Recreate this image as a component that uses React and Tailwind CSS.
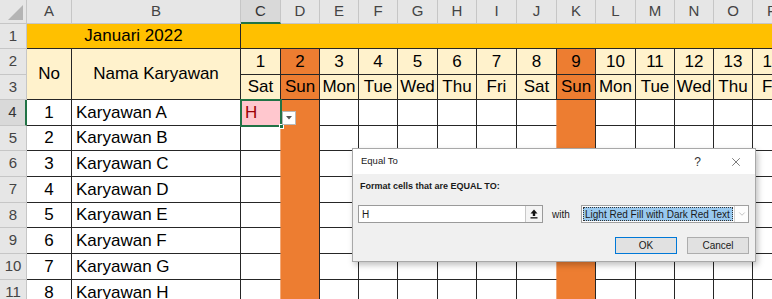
import React from "react";
import { X, ChevronDown } from "lucide-react";

const letters = ["A", "B", "C", "D", "E", "F", "G", "H", "I", "J", "K", "L", "M", "N", "O", "P"];
const days = ["Sat", "Sun", "Mon", "Tue", "Wed", "Thu", "Fri", "Sat", "Sun", "Mon", "Tue", "Wed", "Thu", "Fri"];
const names = ["A", "B", "C", "D", "E", "F", "G", "H"];

const hdr =
  "bg-[#e6e6e6] border-r border-b border-[#c6c6c6] text-[#444] flex items-center justify-center text-[15px]";
const line = "border-r border-b border-[#262626]";

function isSunday(i) {
  return i === 1 || i === 8;
}

export default function App() {
  return (
    <div className="relative w-[772px] h-[299px] overflow-hidden bg-white font-['Liberation_Sans',Arial,sans-serif] text-black">
      <div className="grid grid-cols-[27px_45px_169px_40px_39px_39px_39px_40px_39px_40px_40px_39px_40px_39px_39px_39px_39px] grid-rows-[24px_25px_26px_25px_26px_25px_26px_26px_25px_26px_26px_26px]">
        {/* column headers */}
        <div className={hdr + " items-end justify-end p-[3px]"}>
          <svg width="15" height="15" viewBox="0 0 15 15">
            <path d="M15 0 L15 15 L0 15 Z" fill="#b4b4b4" />
          </svg>
        </div>
        {letters.map((l) => (
          <div
            key={l}
            className={
              l === "C"
                ? "bg-[#d9d9d9] border-r border-[#c6c6c6] border-b-2 border-b-[#217346] text-[#333] flex items-center justify-center text-[15px]"
                : hdr
            }
          >
            {l}
          </div>
        ))}

        {/* row 1 */}
        <div className={hdr}>1</div>
        <div className={"col-span-2 bg-[#ffc000] flex items-center justify-center text-[17px] " + line}>
          Januari 2022
        </div>
        <div className={"col-span-14 bg-[#ffc000] " + line}></div>

        {/* row 2 */}
        <div className={hdr}>2</div>
        <div className={"row-span-2 bg-[#fff2cc] flex items-center justify-center text-[17px] " + line}>No</div>
        <div className={"row-span-2 bg-[#fff2cc] flex items-center justify-center text-[17px] " + line}>
          Nama Karyawan
        </div>
        {days.map((d, i) => (
          <div
            key={"n" + i}
            className={
              (isSunday(i) ? "bg-[#ed7d31] " : "bg-[#fff2cc] ") +
              "flex items-center justify-center text-[17px] " +
              line
            }
          >
            {i + 1}
          </div>
        ))}

        {/* row 3 */}
        <div className={hdr}>3</div>
        {days.map((d, i) => (
          <div
            key={"d" + i}
            className={
              (isSunday(i) ? "bg-[#ed7d31] " : "bg-[#fff2cc] ") +
              "flex items-center justify-center text-[17px] " +
              line
            }
          >
            {d}
          </div>
        ))}

        {/* data rows */}
        {names.map((n, r) => (
          <React.Fragment key={n}>
            <div
              className={
                r === 0
                  ? "bg-[#d9d9d9] border-b border-[#c6c6c6] border-r-2 border-r-[#217346] text-[#333] flex items-center justify-center text-[15px]"
                  : hdr
              }
            >
              {r + 4}
            </div>
            <div className={"flex items-center justify-center text-[17px] " + line}>{r + 1}</div>
            <div className={"flex items-center pl-[4px] text-[17px] " + line}>Karyawan {n}</div>
            {days.map((d, i) => {
              if (isSunday(i)) {
                return <div key={i} className="bg-[#ed7d31] border-r border-[#262626]"></div>;
              }
              const nextSun = isSunday(i + 1);
              return (
                <div
                  key={i}
                  className={
                    "border-b border-[#262626] border-r " +
                    (nextSun ? "border-r-[#f3a978] " : "border-r-[#262626] ") +
                    (r === 0 && i === 0
                      ? "bg-[#ffc7ce] text-[#9c0006] text-[17px] flex items-center pl-[4px]"
                      : "")
                  }
                >
                  {r === 0 && i === 0 ? "H" : ""}
                </div>
              );
            })}
          </React.Fragment>
        ))}
      </div>

      {/* active cell selection */}
      <div className="absolute left-[240px] top-[99px] w-[42px] h-[28px] border-2 border-[#217346]"></div>
      <div className="absolute left-[279px] top-[124px] w-[5px] h-[5px] bg-[#217346] border border-white"></div>
      <div className="absolute left-[282px] top-[111px] w-[14px] h-[14px] bg-white border border-[#b8b8b8] flex items-center justify-center">
        <svg width="6" height="4" viewBox="0 0 6 4">
          <path d="M0 0 H6 L3 3.5 Z" fill="#555" />
        </svg>
      </div>

      {/* Equal To dialog */}
      <div className="absolute left-[352px] top-[148px] w-[404px] h-[114px] bg-[#f0f0f0] border border-[#a8a8a8] shadow-[2px_3px_6px_rgba(0,0,0,0.25)] flex flex-col text-[#1a1a1a]">
        <div className="h-[25px] bg-white flex items-center pl-[8px] pr-[12px] text-[9.5px]">
          <span className="flex-1">Equal To</span>
          <span className="text-[12px] mr-[28px] text-[#333]">?</span>
          <X size={14} strokeWidth={1.1} className="text-[#333]" />
        </div>
        <div className="flex flex-col px-[5px]">
          <div className="mt-[7px] pl-[2px] h-[12px] flex items-center text-[9px] font-bold">
            Format cells that are EQUAL TO:
          </div>
          <div className="mt-[12px] flex items-center h-[18px]">
            <div className="w-[185px] h-[18px] bg-white border border-[#9a9a9a] flex items-center">
              <span className="flex-1 pl-[3px] text-[10px]">H</span>
              <div className="w-[17px] h-full border-l border-[#c8c8c8] bg-[#f4f4f4] flex items-center justify-center">
                <svg width="8" height="10" viewBox="0 0 8 10">
                  <path d="M4 0.5 L0.5 4.5 H2.8 V7 H5.2 V4.5 H7.5 Z" fill="#111" />
                  <rect x="0.5" y="8.2" width="7" height="1.3" fill="#111" />
                </svg>
              </div>
            </div>
            <span className="ml-[9px] text-[10px] w-[29px]">with</span>
            <div className="w-[168px] h-[18px] bg-[#fdfdfd] border border-[#a0a0a0] flex items-center pl-[1px]">
              <div className="w-[150px] h-[14px] bg-[#99c9ef] border border-dotted border-[#333] flex items-center pl-[1px] text-[10px] whitespace-nowrap overflow-hidden">
                Light Red Fill with Dark Red Text
              </div>
              <div className="flex-1 h-full flex items-center justify-center border-l border-[#d0d0d0] ml-[1px]">
                <ChevronDown size={10} strokeWidth={1.2} className="text-[#888]" />
              </div>
            </div>
          </div>
          <div className="mt-[14px] flex justify-end gap-[10px] pr-[1px]">
            <div className="w-[62px] h-[17px] bg-[#e1e1e1] border border-[#0078d7] flex items-center justify-center text-[10px]">
              OK
            </div>
            <div className="w-[62px] h-[17px] bg-[#e1e1e1] border border-[#adadad] flex items-center justify-center text-[10px]">
              Cancel
            </div>
          </div>
        </div>
      </div>
    </div>
  );
}
